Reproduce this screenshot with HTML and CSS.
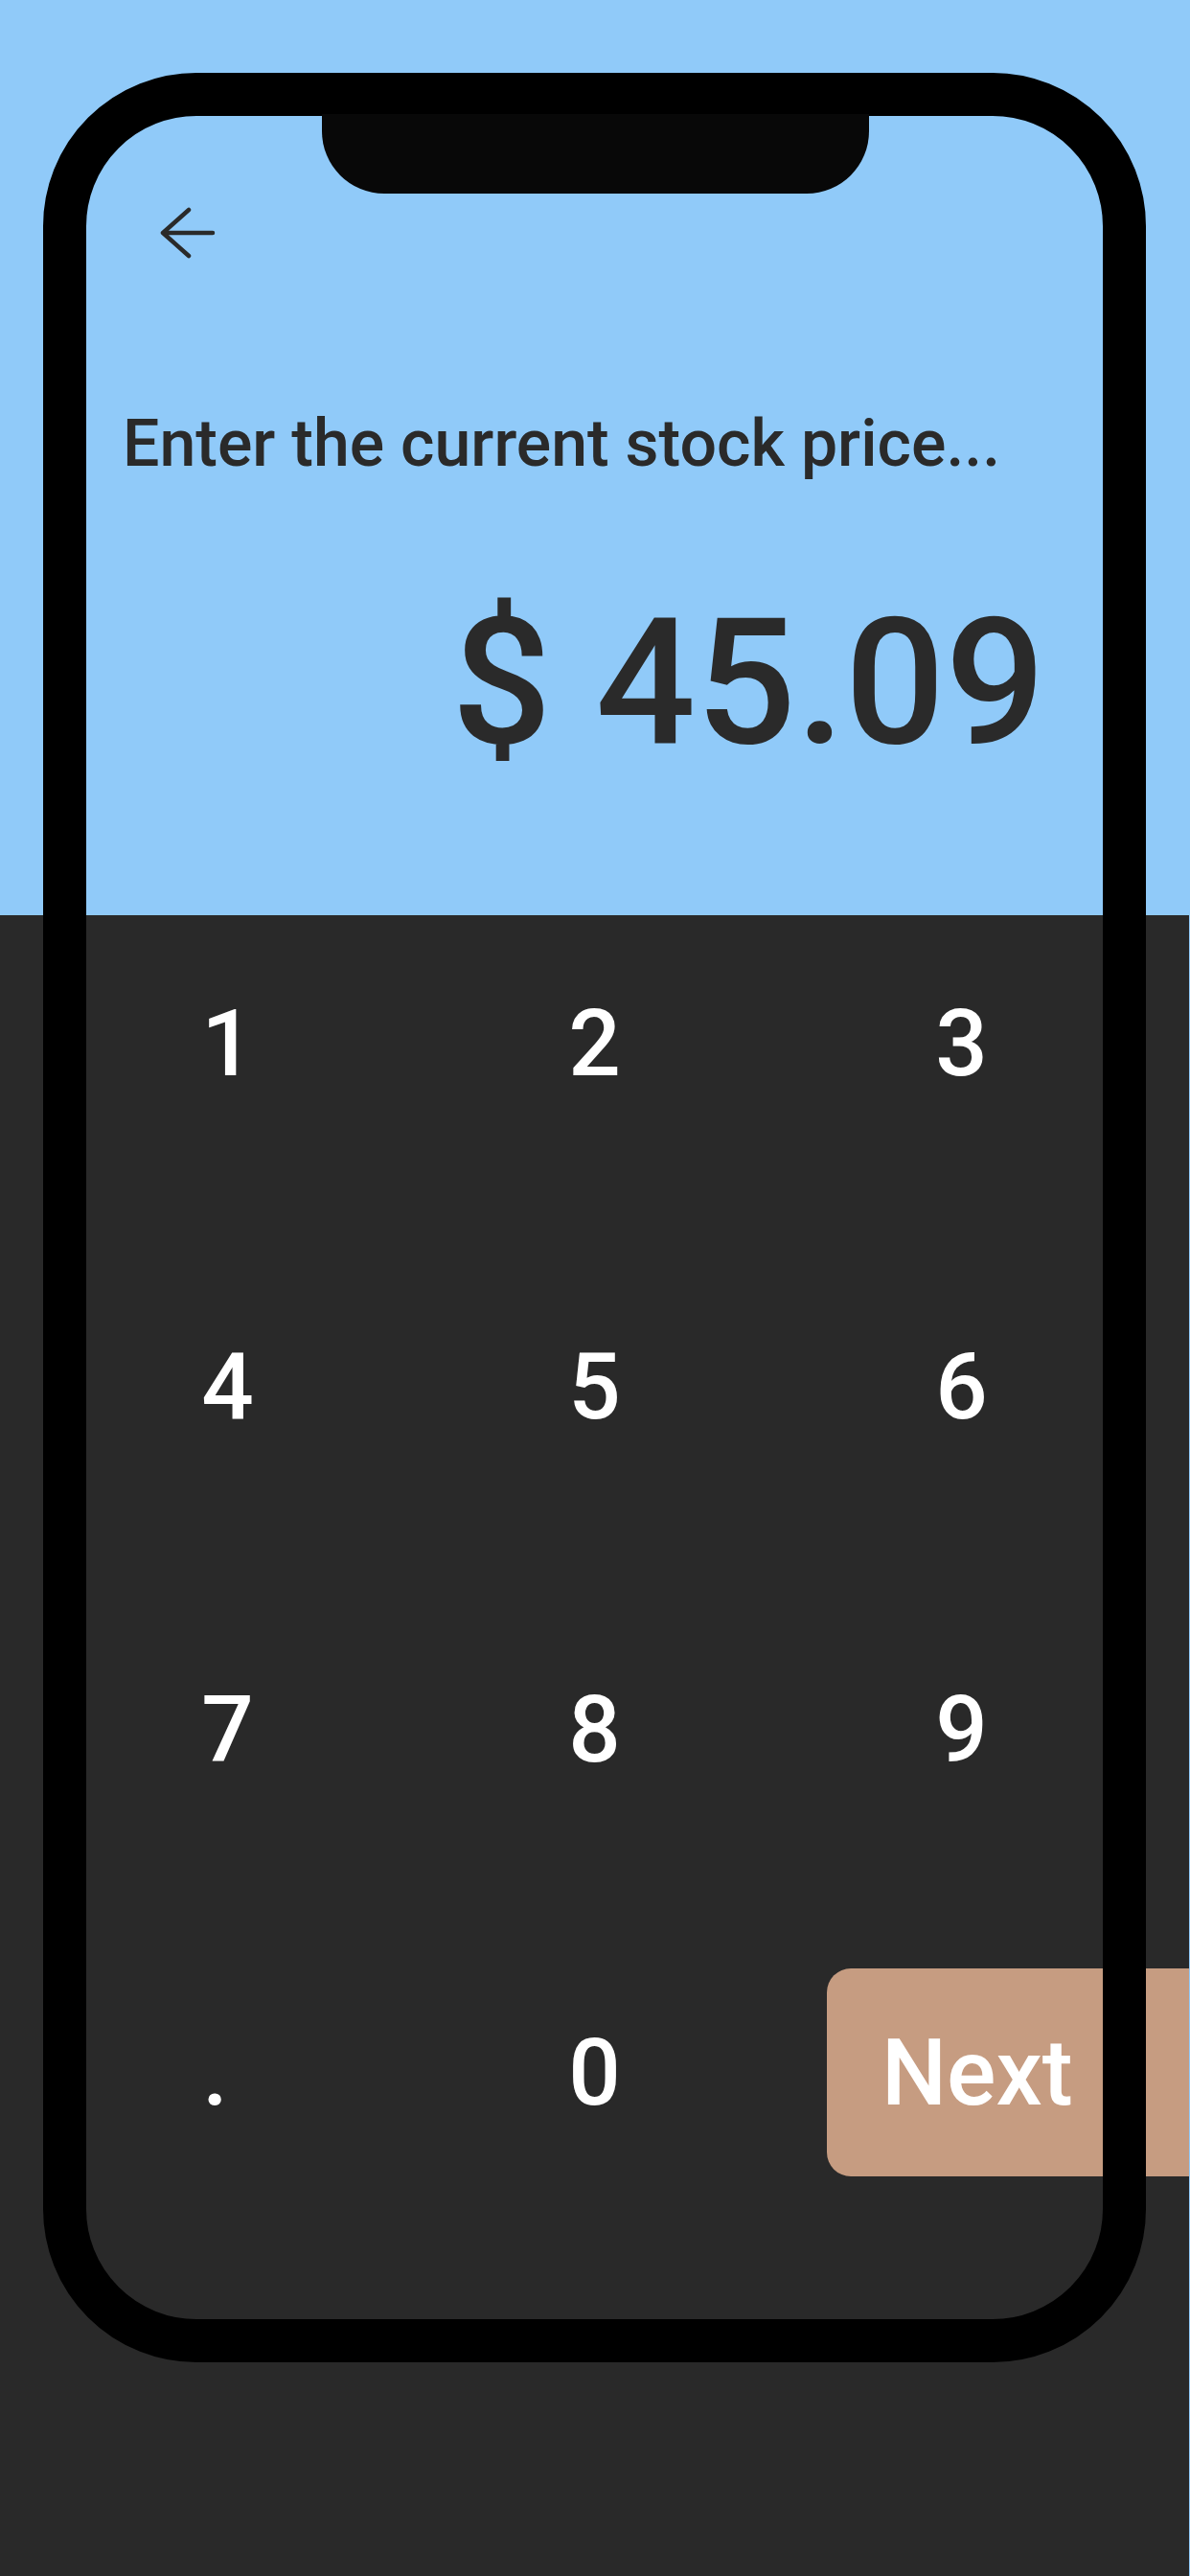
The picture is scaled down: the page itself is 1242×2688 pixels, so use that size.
FILE: index.html
```html
<!DOCTYPE html>
<html lang="en">
<head>
<meta charset="utf-8">
<title>Stock price</title>
<link rel="stylesheet" href="styles.css">
</head>
<body>
<div class="page">
  <section class="top">
    <svg class="back" viewBox="0 0 60 56" width="60" height="56" aria-label="Back">
      <path d="M56 28 H4 M31 4 L4 28 L31 52" fill="none" stroke="#2a2a2a" stroke-width="4.5" stroke-linecap="round" stroke-linejoin="round"/>
    </svg>
    <h1 class="title">Enter the current stock price...</h1>
    <div class="price">$ 45.09</div>
  </section>
  <section class="pad">
    <div class="grid">
      <div class="key">1</div>
      <div class="key">2</div>
      <div class="key">3</div>
      <div class="key">4</div>
      <div class="key">5</div>
      <div class="key">6</div>
      <div class="key">7</div>
      <div class="key">8</div>
      <div class="key">9</div>
      <div class="key key-dot">.</div>
      <div class="key">0</div>
      <div class="key next-cell"><div class="next">Next</div></div>
    </div>
  </section>
</div>
<div class="frame"><div class="notch"></div></div>
</body>
</html>
```

FILE: styles.css
```css
html, body {
  margin: 0;
  padding: 0;
}
body {
  width: 1242px;
  height: 2688px;
  overflow: hidden;
  background: #90caf9;
  font-family: Roboto, "Liberation Sans", sans-serif;
  position: relative;
}
.page {
  display: flex;
  flex-direction: column;
  height: 2688px;
}
.top {
  height: 955px;
  box-sizing: border-box;
  padding-top: 215px;
  display: flex;
  flex-direction: column;
  background: #90caf9;
  color: #2a2a2a;
}
.back {
  display: block;
  margin-left: 166px;
}
.title {
  margin: 158px 0 0 0;
  padding-left: 128px;
  font-size: 68px;
  line-height: 1;
  font-weight: 500;
  color: #2a2a2a;
}
.price {
  margin-top: 123px;
  padding-right: 151px;
  text-align: right;
  font-size: 184px;
  line-height: 1;
  font-weight: 500;
  color: #2a2a2a;
}
.pad {
  flex: 1;
  width: 1241px;
  background: #292929;
  overflow: hidden;
  padding-top: 25px;
  box-sizing: border-box;
}
.grid {
  margin-left: 46px;
  width: 1149px;
  display: grid;
  grid-template-columns: repeat(3, 383px);
  grid-auto-rows: 217px;
  row-gap: 141px;
}
.key {
  display: flex;
  align-items: center;
  justify-content: center;
  color: #ffffff;
  font-size: 96px;
  line-height: 1;
  font-weight: 500;
}
.key-dot {
  padding-right: 26px;
}
.next-cell {
  justify-content: flex-start;
}
.next {
  margin-left: 51px;
  flex: none;
  width: 520px;
  height: 217px;
  box-sizing: border-box;
  padding-left: 57px;
  display: flex;
  align-items: center;
  background: #c69c81;
  border-radius: 25px;
  color: #ffffff;
  font-size: 96px;
  font-weight: 500;
}
.frame {
  position: absolute;
  left: 45px;
  top: 76px;
  width: 1151px;
  height: 2389px;
  box-sizing: border-box;
  border: 45px solid #000000;
  border-radius: 160px;
  pointer-events: none;
}
.notch {
  position: absolute;
  left: 246px;
  top: -2px;
  width: 571px;
  height: 83px;
  background: #080808;
  border-radius: 0 0 65px 65px;
}
```
